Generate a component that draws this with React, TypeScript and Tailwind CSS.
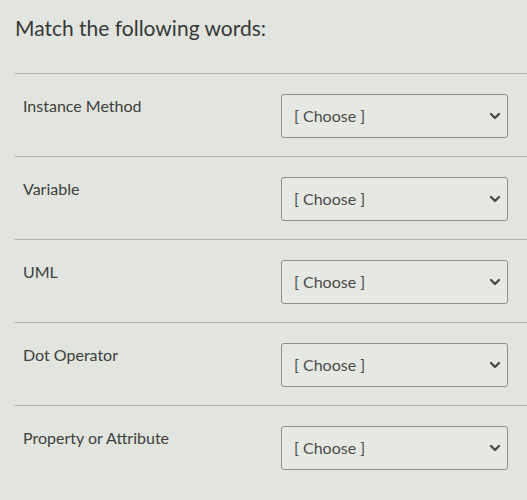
import React from 'react';

const items = [
  'Instance Method',
  'Variable',
  'UML',
  'Dot Operator',
  'Property or Attribute',
];

const Chevron = () => (
  <svg width="12" height="8" viewBox="0 0 12 8" className="shrink-0">
    <polyline
      points="2,2 6,6 10,2"
      fill="none"
      stroke="#4a4c4a"
      strokeWidth="2.4"
      strokeLinecap="round"
      strokeLinejoin="round"
    />
  </svg>
);

const MatchRow = ({ label }: { label: string }) => (
  <div className="flex items-start border-t border-[#aeb0ac] pt-[20px] pb-[18px]">
    <div className="w-[266px] shrink-0 pl-[8px] text-[16px] leading-[24px] text-[#3d3f3d]">
      {label}
    </div>
    <div className="flex h-[44px] w-[227px] items-center justify-between rounded-[3px] border border-[#8d8f8b] bg-[#e6e8e4] pl-[12px] pr-[6px]">
      <span className="text-[16px] text-[#4a4c4a]">[ Choose ]</span>
      <Chevron />
    </div>
  </div>
);

const App = () => {
  return (
    <div
      className="min-h-[500px] w-[527px] bg-[#e2e4e0] pl-[15px] pt-[13px]"
      style={{ fontFamily: 'Lato, "Open Sans", sans-serif' }}
    >
      <h1 className="text-[21px] leading-[30px] text-[#363836]">Match the following words:</h1>
      <div className="mt-[30px]">
        {items.map((label) => (
          <MatchRow key={label} label={label} />
        ))}
      </div>
    </div>
  );
};

export default App;
